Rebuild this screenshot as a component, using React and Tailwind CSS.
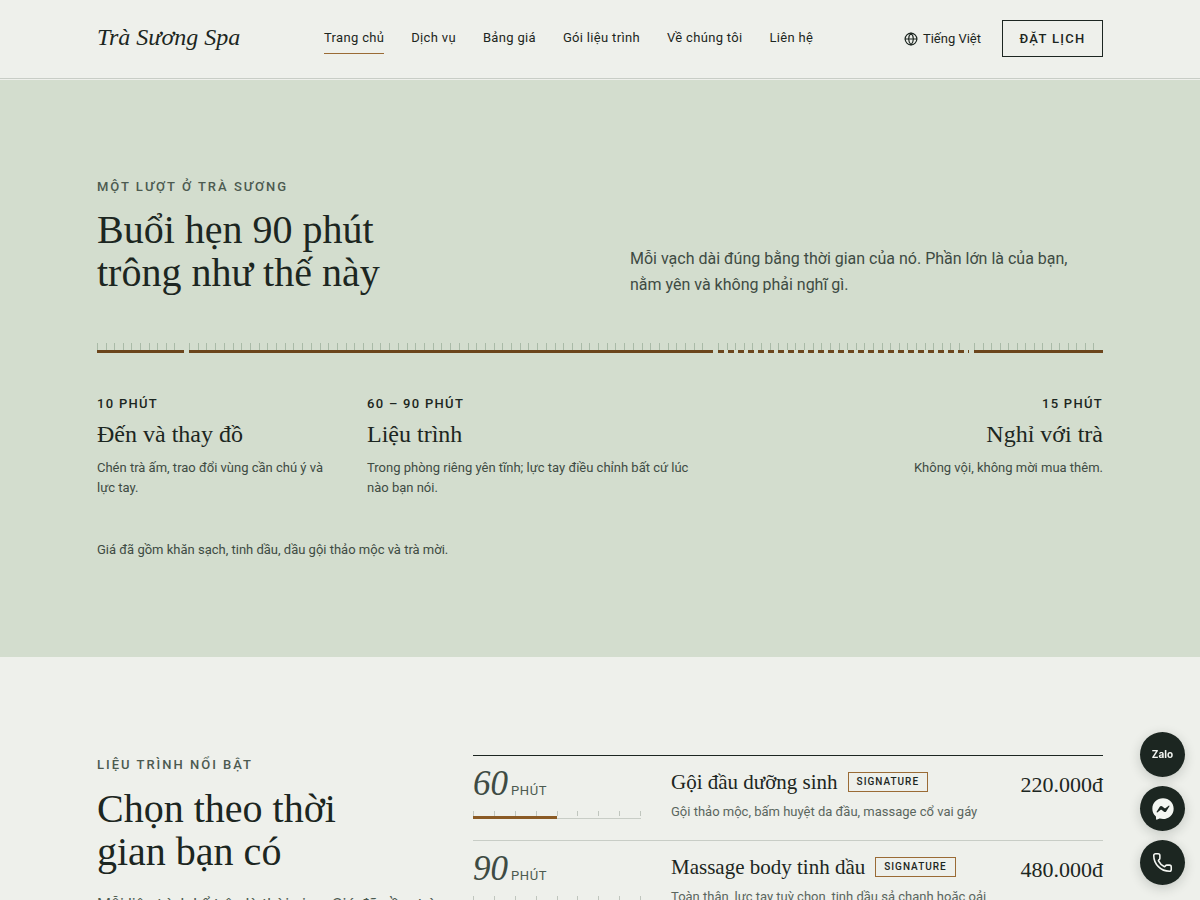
import React from 'react';
import { Globe, Phone } from 'lucide-react';
import { FaFacebookMessenger } from 'react-icons/fa6';

const navItems = ['Trang chủ', 'Dịch vụ', 'Bảng giá', 'Gói liệu trình', 'Về chúng tôi', 'Liên hệ'];

const treatments = [
  {
    minutes: 60,
    name: 'Gội đầu dưỡng sinh',
    description: 'Gội thảo mộc, bấm huyệt da đầu, massage cổ vai gáy',
    price: '220.000đ',
  },
  {
    minutes: 90,
    name: 'Massage body tinh dầu',
    description: 'Toàn thân, lực tay tuỳ chọn, tinh dầu sả chanh hoặc oải hương',
    price: '480.000đ',
  },
];

// A full bar in the treatment list stands for two hours
const MAX_MINUTES = 120;

// Small tick marks, evenly spaced above a bar
const Ticks = ({ count, closed, className }) => (
  <div className={`flex justify-between ${className}`}>
    {Array.from({ length: count }, (_, index) => (
      <span key={index} className="w-px bg-current" />
    ))}
    {!closed && <span className="w-px" />}
  </div>
);

const Segment = ({ minutes, dashed }) => (
  <div>
    <Ticks count={minutes} className="h-[7px] text-[#a9baa7]" />
    <div
      className={
        dashed
          ? 'h-[3px] bg-[repeating-linear-gradient(90deg,#6b451c_0_6px,transparent_6px_10px)]'
          : 'h-[3px] bg-[#6b451c]'
      }
    />
  </div>
);

const Eyebrow = ({ children }) => (
  <p className="text-[13px] leading-5 font-medium tracking-[2px] uppercase text-[#4c5a50]">{children}</p>
);

const Step = ({ time, title, children, className }) => (
  <div className={className}>
    <p className="text-[13px] leading-5 font-medium tracking-widest text-[#1c2621]">{time}</p>
    <h3 className="mt-1 font-['Liberation_Serif',serif] text-2xl leading-8 text-[#1c2621]">{title}</h3>
    <p className="mt-2 text-[13px] leading-5 text-[#3e4b43]">{children}</p>
  </div>
);

const Header = () => (
  <header className="bg-[#eef0eb] pb-px">
    <div className="flex h-[79px] items-center border-b border-[#c8cdc6] px-[97px] pb-px">
      <a
        href="#"
        className="w-[227px] pb-1 font-['Liberation_Serif',serif] text-2xl leading-8 italic text-[#1c2621]"
      >
        Trà Sương Spa
      </a>
      <nav className="flex gap-[27px]">
        {navItems.map((item, index) => (
          <a
            key={item}
            href="#"
            className={`border-b py-1 text-[13px] leading-[22px] tracking-wide whitespace-nowrap text-[#1c2621] ${
              index === 0 ? 'border-b-[#9a6b35]' : 'border-b-transparent'
            }`}
          >
            {item}
          </a>
        ))}
      </nav>
      <div className="ml-auto flex items-center gap-[21px]">
        <button type="button" className="flex items-center gap-[5px] text-[13px] whitespace-nowrap text-[#1c2621]">
          <Globe size={14} strokeWidth={2} />
          Tiếng Việt
        </button>
        <button
          type="button"
          className="h-[37px] w-[101px] border border-[#1c2621] text-[13px] font-medium tracking-widest whitespace-nowrap text-[#1c2621]"
        >
          ĐẶT LỊCH
        </button>
      </div>
    </div>
  </header>
);

const VisitSection = () => (
  <section className="bg-[#d3ddce] px-[97px] py-[97px]">
    <div className="grid grid-cols-2 items-end gap-[60px]">
      <div>
        <Eyebrow>Một lượt ở Trà Sương</Eyebrow>
        <h2 className="mt-[11px] pb-1 font-['Liberation_Serif',serif] text-[40px] leading-[43px] text-[#1c2621]">
          Buổi hẹn 90 phút
          <br />
          trông như thế này
        </h2>
      </div>
      <p className="text-base leading-[26px] text-[#3e4b43]">
        Mỗi vạch dài đúng bằng thời gian của nó. Phần lớn là của bạn,
        <br />
        nằm yên và không phải nghĩ gì.
      </p>
    </div>

    <div className="mt-[45px] grid grid-cols-[87fr_524fr_251fr_129fr] gap-[5px]">
      <Segment minutes={10} />
      <Segment minutes={60} />
      <Segment minutes={29} dashed />
      <Segment minutes={15} />
    </div>

    <div className="mt-[41px] flex">
      <Step time="10 PHÚT" title="Đến và thay đồ" className="w-[240px]">
        Chén trà ấm, trao đổi vùng cần chú ý và lực tay.
      </Step>
      <Step time="60 – 90 PHÚT" title="Liệu trình" className="ml-[30px] w-[330px]">
        Trong phòng riêng yên tĩnh; lực tay điều chỉnh bất cứ lúc nào bạn nói.
      </Step>
      <Step time="15 PHÚT" title="Nghỉ với trà" className="ml-auto text-right">
        Không vội, không mời mua thêm.
      </Step>
    </div>

    <p className="mt-[42px] text-[13px] leading-5 text-[#3e4b43]">
      Giá đã gồm khăn sạch, tinh dầu, dầu gội thảo mộc và trà mời.
    </p>
  </section>
);

const TreatmentRow = ({ treatment }) => (
  <li className="grid grid-cols-[168px_1fr_auto] gap-[30px] border-b border-[#c8cdc6] pt-[11px] pb-[18px]">
    <div className="pt-px">
      <div className="flex items-baseline gap-[3px] text-[#4c5a50]">
        <span className="font-['Liberation_Serif',serif] text-[35px] leading-8 italic text-[#3e4b43]">
          {treatment.minutes}
        </span>
        <span className="text-[13px] leading-5 tracking-wider">PHÚT</span>
      </div>
      <Ticks count={9} closed className="mt-[10px] h-[5px] text-[#c0c6be]" />
      <div className="h-[3px] border-b border-[#c8cdc6]">
        <div className="h-[3px] bg-[#8a5a24]" style={{ width: `${(treatment.minutes / MAX_MINUTES) * 100}%` }} />
      </div>
    </div>
    <div>
      <div className="flex items-center gap-[10px]">
        <h3 className="font-['Liberation_Serif',serif] text-[21px] leading-[30px] text-[#1c2621]">{treatment.name}</h3>
        <span className="border border-[#9a6b35] px-2 text-[10px] leading-[18px] font-medium tracking-widest text-[#1c2621]">
          SIGNATURE
        </span>
      </div>
      <p className="mt-[5px] text-[13px] leading-5 text-[#5a665e]">{treatment.description}</p>
    </div>
    <p className="pt-[3px] font-['Liberation_Serif',serif] text-[22px] leading-[30px] text-[#1c2621]">
      {treatment.price}
    </p>
  </li>
);

const FeaturedSection = () => (
  <section className="grid grid-cols-[346fr_630fr] gap-[30px] px-[97px] pt-[98px]">
    <div>
      <Eyebrow>Liệu trình nổi bật</Eyebrow>
      <h2 className="mt-3 font-['Liberation_Serif',serif] text-[40px] leading-[43px] text-[#1c2621]">
        Chọn theo thời
        <br />
        gian bạn có
      </h2>
      <p className="mt-5 text-base leading-6 text-[#4c5a50]">
        Mỗi liệu trình kể trên là thời gian. Giá đã gồm trà.
      </p>
    </div>
    <ul className="border-t border-[#1c2621]">
      {treatments.map((treatment) => (
        <TreatmentRow key={treatment.name} treatment={treatment} />
      ))}
    </ul>
  </section>
);

const contactClass =
  'flex size-[45px] items-center justify-center rounded-full bg-[#1c2621] text-[#f4f6f2] shadow-[0_3px_12px_rgba(28,38,33,0.2)]';

const ContactButtons = () => (
  <div className="fixed right-[15px] bottom-[15px] flex flex-col gap-[9px]">
    <a href="#" className={contactClass}>
      <span className="font-[Inter,sans-serif] text-[10px] font-bold">Zalo</span>
    </a>
    <a href="#" aria-label="Messenger" className={contactClass}>
      <FaFacebookMessenger size={22} />
    </a>
    <a href="#" aria-label="Gọi điện" className={contactClass}>
      <Phone size={21} strokeWidth={1.8} />
    </a>
  </div>
);

const App = () => {
  return (
    <div className="h-screen overflow-hidden bg-[#eef0eb] font-[Roboto,sans-serif]">
      <Header />
      <main>
        <VisitSection />
        <FeaturedSection />
      </main>
      <ContactButtons />
    </div>
  );
};

export default App;
